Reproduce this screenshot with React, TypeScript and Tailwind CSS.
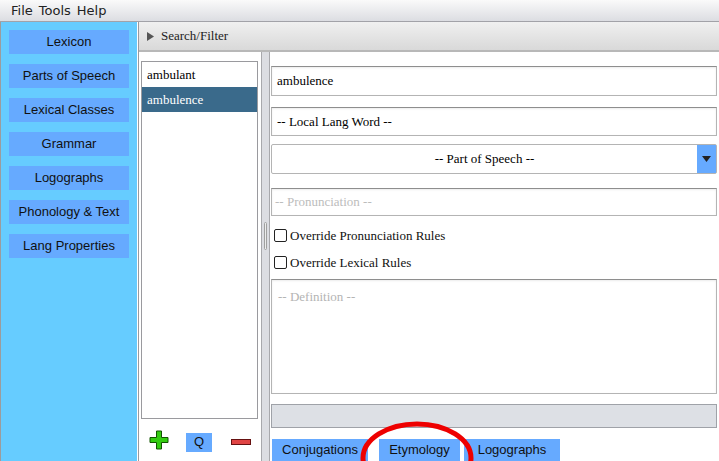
import React from "react";

const navItems = [
  "Lexicon",
  "Parts of Speech",
  "Lexical Classes",
  "Grammar",
  "Logographs",
  "Phonology & Text",
  "Lang Properties",
];

const serif = "font-['Liberation_Serif','DejaVu_Serif',serif]";
const sans = "font-['Liberation_Sans',Arial,sans-serif]";
const field =
  "border border-[#b4b4b4] border-t-[#8e8e8e] bg-white shadow-[inset_0_1px_2px_rgba(0,0,0,0.08)]";

const Check: React.FC<{ label: string }> = ({ label }) => (
  <div className="flex items-center h-[13px]">
    <div className="w-[13px] h-[13px] border border-[#222] rounded-[2px] bg-white" />
    <span className={`${serif} text-[13px] text-[#111] ml-[3px] leading-none`}>{label}</span>
  </div>
);

export default function App() {
  return (
    <div className="relative w-[719px] h-[461px] overflow-hidden bg-white flex flex-col">
      {/* menu bar */}
      <div className="h-[22px] flex items-center gap-[6px] pl-[11px] bg-gradient-to-b from-[#fafafa] to-[#dcdde2] border-b border-[#a2a2a8] font-['DejaVu_Sans',sans-serif] text-[13px] text-[#222]">
        <span>File</span>
        <span>Tools</span>
        <span>Help</span>
      </div>

      <div className="flex flex-1 min-h-0">
        <div className="w-[1px] bg-[#9c9c9c]" />
        {/* left nav */}
        <div className="w-[136px] bg-[#66ccff] pl-[8px] pt-[8px] flex flex-col gap-[10px]">
          {navItems.map((n) => (
            <div
              key={n}
              className={`w-[120px] h-[24px] bg-[#66aaff] flex items-center justify-center ${sans} text-[13px] text-[#111]`}
            >
              {n}
            </div>
          ))}
        </div>
        <div className="w-[1px] bg-white" />
        <div className="w-[1px] bg-[#9a9a9e]" />

        {/* main */}
        <div className="flex-1 flex flex-col">
          <div className="h-[30px] flex items-center bg-gradient-to-b from-[#f0f0f0] to-[#d9d9d9] border-b-2 border-[#b8b8b8]">
            <svg width="7" height="9" viewBox="0 0 7 9" className="ml-[8px]">
              <path d="M0 0 L7 4.5 L0 9 Z" fill="#555" />
            </svg>
            <span className={`${serif} text-[13px] text-[#222] ml-[7px]`}>Search/Filter</span>
          </div>

          <div className="flex flex-1 min-h-0">
            {/* word list */}
            <div className="ml-[2px] pt-[9px] w-[117px] flex flex-col">
              <div className="h-[358px] border border-[#9a9a9e] bg-white">
                <div className={`h-[25px] flex items-center pl-[5px] ${serif} text-[13px] text-black`}>ambulant</div>
                <div className={`h-[25px] flex items-center pl-[5px] bg-[#3a6a8b] ${serif} text-[13px] text-white`}>
                  ambulence
                </div>
              </div>
              <div className="flex items-center mt-[11px] h-[20px]">
                <svg width="20" height="20" viewBox="0 0 20 20" className="ml-[8px]">
                  <path
                    d="M7.5 1 H12.5 V7.5 H19 V12.5 H12.5 V19 H7.5 V12.5 H1 V7.5 H7.5 Z"
                    fill="#33cc11"
                    stroke="#115500"
                    strokeWidth="1"
                  />
                </svg>
                <div className={`ml-[17px] mt-[4px] w-[26px] h-[19px] bg-[#66aaff] flex items-center justify-center ${sans} text-[13px] text-[#111]`}>
                  Q
                </div>
                <svg width="20" height="8" viewBox="0 0 20 8" className="ml-[19px] mt-[3px]">
                  <rect x="0.5" y="1.5" width="19" height="5" fill="#e04444" stroke="#661111" strokeWidth="1" />
                </svg>
              </div>
            </div>

            {/* splitter */}
            <div className="ml-[3px] w-[9px] bg-[#dcdde2] border-x border-[#a8a8ac] flex items-center justify-center">
              <div className="w-[3px] h-[28px] -mt-[42px] rounded-full border border-[#a0a0a0] bg-[#ececec]" />
            </div>

            {/* detail */}
            <div className="ml-[1px] w-[446px] pt-[14px] flex flex-col">
              <div className={`${field} h-[30px] flex items-center pl-[5px] ${serif} text-[13px] text-black`}>ambulence</div>
              <div className={`${field} mt-[11px] h-[30px] flex items-center pl-[5px] ${serif} text-[13px] text-black`}>
                -- Local Lang Word --
              </div>
              <div className="mt-[8px] h-[30px] flex border border-[#b4b4b4] rounded-[2px] bg-white">
                <div className={`flex-1 flex items-center justify-center ${serif} text-[13px] text-black`}>
                  -- Part of Speech --
                </div>
                <div className="w-[19px] bg-[#66aaff] flex items-center justify-center">
                  <svg width="9" height="6" viewBox="0 0 9 6">
                    <path d="M0 0 H9 L4.5 6 Z" fill="#222" />
                  </svg>
                </div>
              </div>
              <div className={`${field} mt-[14px] h-[29px] flex items-center pl-[3px] ${serif} text-[13px] text-[#bcbcbc]`}>
                -- Pronunciation --
              </div>
              <div className="mt-[13px] ml-[3px]">
                <Check label="Override Pronunciation Rules" />
              </div>
              <div className="mt-[14px] ml-[3px]">
                <Check label="Override Lexical Rules" />
              </div>
              <div className={`${field} mt-[10px] h-[116px] pl-[6px] pt-[7px] ${serif} text-[13px] text-[#b4b4b4]`}>
                -- Definition --
              </div>
              <div className="mt-[10px] h-[25px] bg-[#dde0e5] border border-[#9fa2a8]" />
              <div className={`mt-[11px] h-[22px] flex ${sans} text-[13px] text-[#111]`}>
                <div className="ml-[1px] w-[96px] bg-[#66aaff] flex items-center justify-center">Conjugations</div>
                <div className="w-[11px]" />
                <div className="w-[81px] bg-[#66aaff] flex items-center justify-center">Etymology</div>
                <div className="w-[4px]" />
                <div className="w-[96px] bg-[#66aaff] flex items-center justify-center">Logographs</div>
              </div>
            </div>
          </div>
        </div>
      </div>

      {/* red annotation ellipse */}
      <svg className="absolute left-0 top-0 pointer-events-none" width="719" height="461">
        <ellipse cx="417" cy="458" rx="54" ry="34" fill="none" stroke="#ee0000" strokeWidth="5" />
      </svg>
    </div>
  );
}
